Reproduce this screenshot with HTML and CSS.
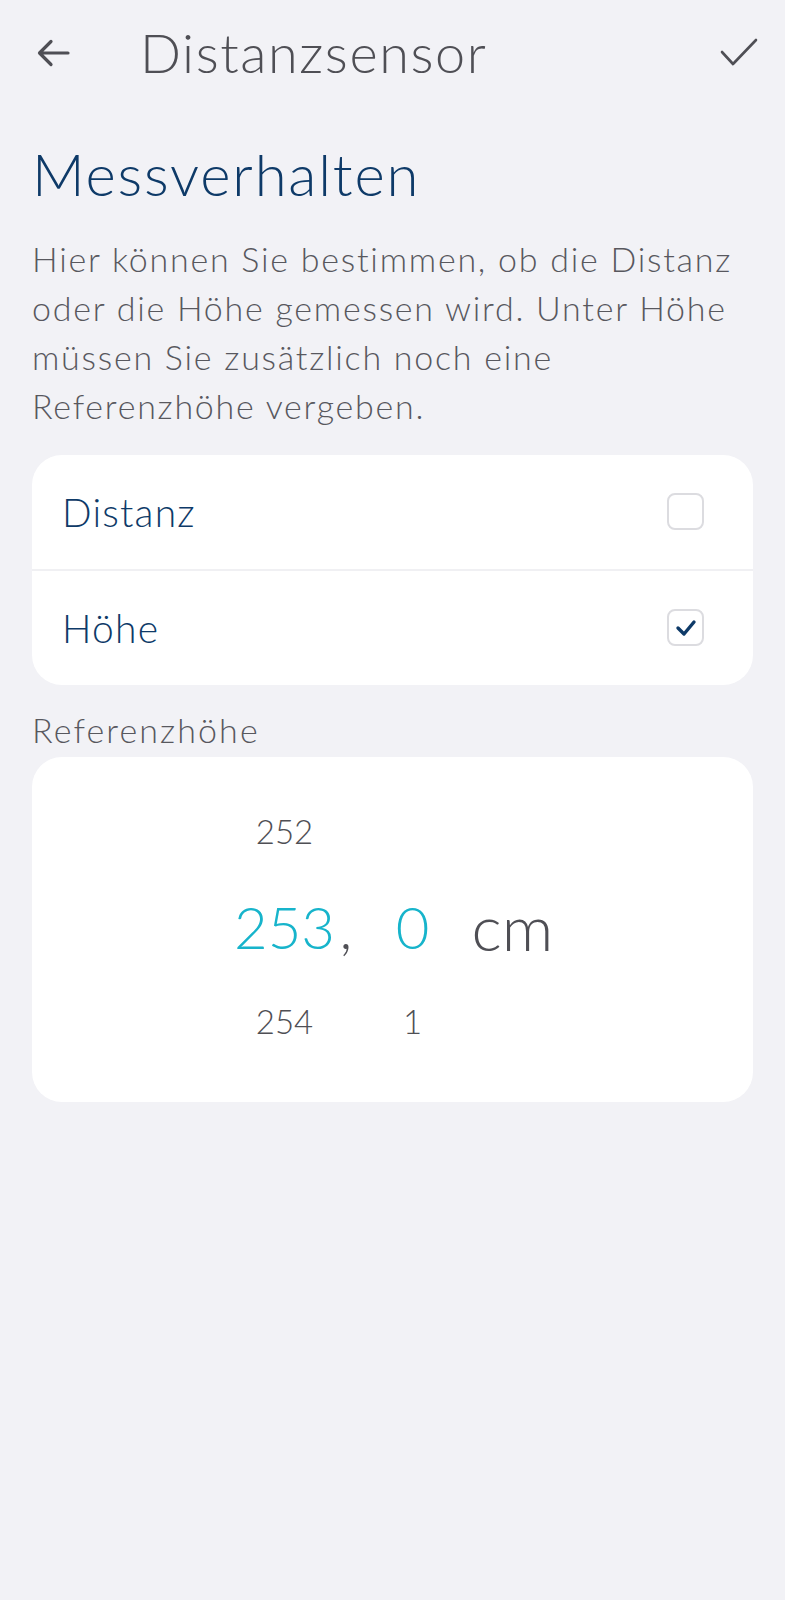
FILE: index.html
```html
<!DOCTYPE html>
<html lang="de">
<head>
    <meta charset="UTF-8">
    <meta name="viewport" content="width=device-width, initial-scale=1.0">
    <title>Distanzsensor</title>
    <link rel="stylesheet" href="styles.css">
</head>
<body>

<header class="topbar">
    <button class="icon-btn" aria-label="Zurück">
        <svg width="34" height="30" viewBox="0 0 34 30"><path d="M32 15H4M15 3.5L3.5 15 15 26.5" fill="none" stroke="#4f4f55" stroke-width="3.2" stroke-linecap="round" stroke-linejoin="round"/></svg>
    </button>
    <h1 class="title">Distanzsensor</h1>
    <button class="icon-btn" aria-label="Speichern">
        <svg width="40" height="30" viewBox="0 0 40 30"><path d="M3 14l11 12L37 2" fill="none" stroke="#4f4f55" stroke-width="2.6" stroke-linecap="round" stroke-linejoin="round"/></svg>
    </button>
</header>

<main class="content">
    <h2 class="section-title">Messverhalten</h2>
    <p class="section-text">Hier können Sie bestimmen, ob die Distanz oder die Höhe gemessen wird. Unter Höhe müssen Sie zusätzlich noch eine Referenzhöhe vergeben.</p>

    <div class="card options">
        <div class="option">
            <span>Distanz</span>
            <span class="checkbox"></span>
        </div>
        <div class="option">
            <span>Höhe</span>
            <span class="checkbox">
                <svg width="22" height="18" viewBox="0 0 22 18"><path d="M3 9l6 6L19 3" fill="none" stroke="#0e3a68" stroke-width="3.4" stroke-linecap="round" stroke-linejoin="round"/></svg>
            </span>
        </div>
    </div>

    <div class="field-label">Referenzhöhe</div>

    <div class="card picker">
        <span class="num">252</span><span></span><span class="num"></span><span></span>
        <span class="num active">253</span><span class="sep">,</span><span class="num active">0</span><span class="unit">cm</span>
        <span class="num">254</span><span></span><span class="num">1</span><span></span>
    </div>
</main>

</body>
</html>
```

FILE: styles.css
```css
body { margin: 0; background: #f2f2f6; font-family: 'Lato', 'Open Sans', sans-serif; font-weight: 300; color: #4f4f55; }
button { background: none; border: none; padding: 0; cursor: pointer; }

.topbar { display: flex; align-items: center; height: 106px; padding: 0 26px 0 36px; }
.icon-btn { display: flex; align-items: center; justify-content: center; }
.title { flex: 1; margin: 0 0 0 70px; font-size: 54px; font-weight: 300; letter-spacing: 1.6px; color: #4f4f55; line-height: 1; }

.content { padding: 0 32px; }
.section-title { margin: 33px 0 0; font-size: 58px; font-weight: 300; letter-spacing: 1.8px; color: #0e3a68; line-height: 1.2; }
.section-text { margin: 25px 0 0; font-size: 34px; line-height: 49px; letter-spacing: 1.75px; color: #58585e; }

.card { background: #fff; border-radius: 30px; }
.options { margin-top: 25px; }
.option { display: flex; align-items: center; justify-content: space-between; height: 114px; padding: 0 49px 0 30px; font-size: 39px; letter-spacing: 1.2px; color: #0e3a68; }
.option + .option { border-top: 2px solid #f0f0f3; }
.checkbox { display: flex; align-items: center; justify-content: center; width: 33px; height: 33px; border: 2px solid #dcdce0; border-radius: 8px; }

.field-label { margin: 24px 0 7px; font-size: 34px; letter-spacing: 2.1px; color: #58585e; }

.picker { display: grid; grid-template-columns: 110px 30px 86px 100px; grid-auto-rows: 95px; justify-content: center; align-items: center; padding: 27px 0 33px; }
.num { text-align: center; font-size: 33px; color: #4f4f55; }
.num.active { font-size: 58px; color: #17b4cb; }
.sep { font-size: 58px; color: #4f4f55; }
.unit { padding-left: 16px; font-size: 64px; color: #4f4f55; }
```
